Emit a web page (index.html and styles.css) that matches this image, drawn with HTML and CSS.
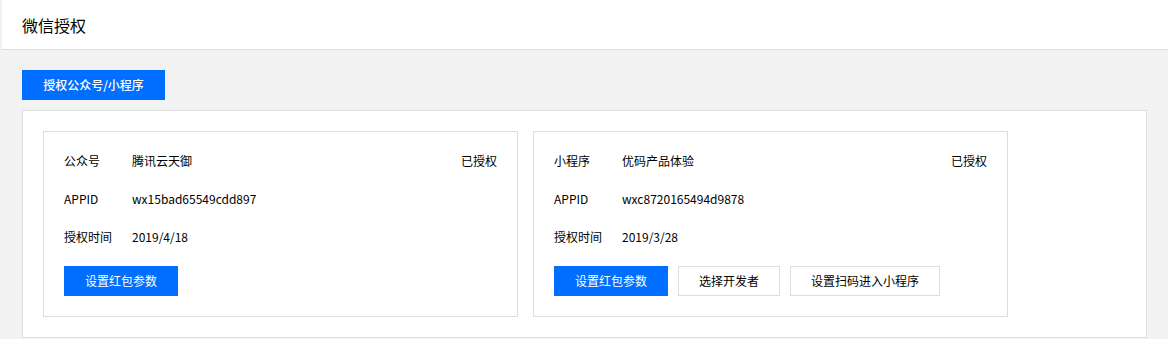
FILE: index.html
```html
<!DOCTYPE html>
<html lang="zh-CN">

<head>
    <meta charset="UTF-8">
    <meta name="viewport" content="width=device-width, initial-scale=1.0">
    <title>微信授权</title>

    <link rel="stylesheet" href="styles.css">
</head>

<body>
    <div class="header">
        <h1>微信授权</h1>
    </div>

    <div class="main">
        <div class="btn btn-primary">授权公众号/小程序</div>

        <div class="panel">
            <div class="card">
                <div class="row">
                    <span class="label">公众号</span>
                    <span class="value">腾讯云天御</span>
                    <span class="status">已授权</span>
                </div>
                <div class="row">
                    <span class="label">APPID</span>
                    <span class="value">wx15bad65549cdd897</span>
                </div>
                <div class="row">
                    <span class="label">授权时间</span>
                    <span class="value">2019/4/18</span>
                </div>
                <div class="actions">
                    <div class="btn btn-primary">设置红包参数</div>
                </div>
            </div>

            <div class="card">
                <div class="row">
                    <span class="label">小程序</span>
                    <span class="value">优码产品体验</span>
                    <span class="status">已授权</span>
                </div>
                <div class="row">
                    <span class="label">APPID</span>
                    <span class="value">wxc8720165494d9878</span>
                </div>
                <div class="row">
                    <span class="label">授权时间</span>
                    <span class="value">2019/3/28</span>
                </div>
                <div class="actions">
                    <div class="btn btn-primary">设置红包参数</div>
                    <div class="btn">选择开发者</div>
                    <div class="btn">设置扫码进入小程序</div>
                </div>
            </div>
        </div>
    </div>
</body>

</html>
```

FILE: styles.css
```css
* {
    box-sizing: border-box;
}

body {
    margin: 0;
    background-color: #f2f2f2;
    font-family: "Noto Sans CJK SC", "Noto Sans", sans-serif;
    font-size: 12px;
    color: #000;
}

.header {
    height: 50px;
    margin-left: 2px;
    padding-left: 20px;
    background-color: #fff;
    border-bottom: 1px solid #dddddd;
    display: flex;
    align-items: center;
}

h1 {
    margin: 0;
    font-size: 16px;
    font-weight: 400;
    color: #000;
}

.main {
    padding: 20px 21px 0 22px;
}

.panel {
    margin-top: 10px;
    padding: 20px;
    background-color: #fff;
    border: 1px solid #dddddd;
    display: flex;
    gap: 15px;
}

.card {
    width: 475px;
    padding: 20px;
    border: 1px solid #dddddd;
}

.row {
    display: flex;
    height: 18px;
    line-height: 18px;
    margin-bottom: 20px;
}

.label {
    width: 68px;
}

.value {
    flex: 1;
}

.actions {
    display: flex;
    gap: 10px;
}

.btn {
    height: 30px;
    line-height: 28px;
    padding: 0 20px;
    border: 1px solid #dddddd;
    background-color: #fff;
    text-align: center;
    cursor: pointer;
}

.btn-primary {
    display: inline-block;
    background-color: #006eff;
    border-color: #006eff;
    color: #fff;
}

.main > .btn-primary {
    width: 143px;
    font-weight: 500;
}
```
